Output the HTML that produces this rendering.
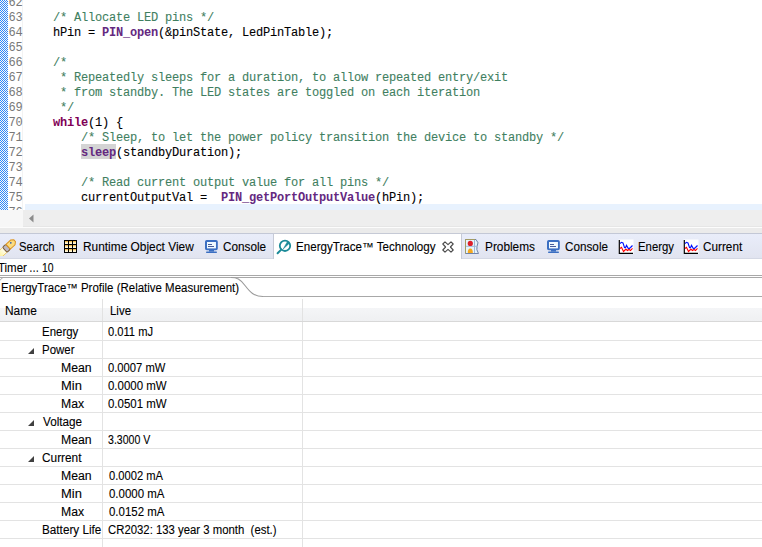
<!DOCTYPE html>
<html><head><meta charset="utf-8">
<style>
*{margin:0;padding:0;box-sizing:border-box}
html,body{width:762px;height:547px;overflow:hidden;background:#fff}
body{position:relative;font-family:"Liberation Sans",sans-serif;font-size:12px;color:#000}
.t{position:absolute;white-space:pre;line-height:20px;font-size:12px;transform-origin:0 0;color:#000;-webkit-text-stroke:0.1px #000}
#editor{position:absolute;left:0;top:0;width:762px;height:210px;overflow:hidden;background:#fff}
#checker{position:absolute;left:0;top:0;width:8px;height:210px;background-color:#fff;
 background-image:conic-gradient(#fffaf2 25%,#2a86ff 0 50%,#fffaf2 0 75%,#2a86ff 0);background-size:2px 2px}
.ln{position:absolute;left:8px;width:14.4px;text-align:right;font-family:"Liberation Mono",monospace;font-size:12px;letter-spacing:-0.2px;color:#787878;line-height:20px;white-space:pre}
.code{position:absolute;left:25px;font-family:"Liberation Mono",monospace;font-size:12px;letter-spacing:-0.2px;color:#000;line-height:20px;white-space:pre;-webkit-text-stroke:0.1px currentColor}
.cm{color:#3f7f5f}
.kw{color:#7f0055;font-weight:bold;-webkit-text-stroke:0}
.fn{color:#642880;font-weight:bold;-webkit-text-stroke:0}
.occ{}
#curline{position:absolute;left:25px;top:204px;width:737px;height:6px;background:#e8f2fe}
#gutline{position:absolute;left:22px;top:0;width:1px;height:210px;background:#f3f3f3}
.r{position:absolute}
</style></head><body>
<div id="editor">
 <div id="checker"></div>
 <div id="gutline"></div>
 <div id="curline"></div>
 <div class="r" style="left:81px;top:144px;width:35px;height:15px;background:#d4d4d4"></div>
<div class='ln' style='top:-7px'>62</div>
<div class='ln' style='top:8px'>63</div>
<div class='code' style='top:8px'>    <span class='cm'>/* Allocate LED pins */</span></div>
<div class='ln' style='top:23px'>64</div>
<div class='code' style='top:23px'>    hPin = <span class='fn'>PIN_open</span>(&amp;pinState, LedPinTable);</div>
<div class='ln' style='top:38px'>65</div>
<div class='ln' style='top:53px'>66</div>
<div class='code' style='top:53px'>    <span class='cm'>/*</span></div>
<div class='ln' style='top:68px'>67</div>
<div class='code' style='top:68px'>    <span class='cm'> * Repeatedly sleeps for a duration, to allow repeated entry/exit</span></div>
<div class='ln' style='top:83px'>68</div>
<div class='code' style='top:83px'>    <span class='cm'> * from standby. The LED states are toggled on each iteration</span></div>
<div class='ln' style='top:98px'>69</div>
<div class='code' style='top:98px'>    <span class='cm'> */</span></div>
<div class='ln' style='top:113px'>70</div>
<div class='code' style='top:113px'>    <span class='kw'>while</span>(1) {</div>
<div class='ln' style='top:128px'>71</div>
<div class='code' style='top:128px'>        <span class='cm'>/* Sleep, to let the power policy transition the device to standby */</span></div>
<div class='ln' style='top:143px'>72</div>
<div class='code' style='top:143px'>        <span class='occ'><span class='fn'>sleep</span></span>(standbyDuration);</div>
<div class='ln' style='top:158px'>73</div>
<div class='ln' style='top:173px'>74</div>
<div class='code' style='top:173px'>        <span class='cm'>/* Read current output value for all pins */</span></div>
<div class='ln' style='top:188px'>75</div>
<div class='code' style='top:188px'>        currentOutputVal =  <span class='fn'>PIN_getPortOutputValue</span>(hPin);</div>
<div class='ln' style='top:203px'>76</div>
</div>
<!-- horizontal scrollbar -->
<div class="r" style="left:0;top:210px;width:23px;height:17px;background:#f7f7f7"></div>
<div class="r" style="left:23px;top:210px;width:739px;height:17px;background:#eeeeee"></div>
<div class="r" style="left:23px;top:210px;width:17px;height:17px;background:#ececec"></div>
<svg class="r" style="left:23px;top:210px" width="17" height="17"><path d="M10.5 4.5 L6 8.5 L10.5 12.5 Z" fill="#8b8b8b"/></svg>
<div class="r" style="left:23px;top:226px;width:739px;height:1px;background:#e6e6e6"></div>
<div class="r" style="left:0;top:227px;width:762px;height:1px;background:#fcfcfc"></div>
<div class="r" style="left:0;top:228px;width:762px;height:5px;background:#ebebeb"></div>
<!-- tab bar -->
<div class="r" style="left:0;top:233px;width:762px;height:1px;background:#c3c8d6"></div>
<div class="r" style="left:0;top:234px;width:762px;height:24px;background:linear-gradient(#e9edfa,#e1e4f0)"></div>
<div class="r" style="left:0;top:258px;width:762px;height:1px;background:#d4d8e4"></div>
<div class="r" style="left:272.5px;top:233px;width:189.5px;height:26px;background:#fff;border:1px solid #c6cad6;border-bottom:none;border-top-left-radius:1px;border-top-right-radius:1px"></div>
<!-- icons -->
<svg class="r" style="left:0;top:236px" width="20" height="20" viewBox="0 0 20 20">
 <defs><linearGradient id="glow" x1="0" y1="0" x2="1" y2="0"><stop offset="0" stop-color="#fff3a0"/><stop offset="1" stop-color="#fffef6"/></linearGradient></defs>
 <g transform="translate(2 16.5) rotate(-43)">
  <rect x="-4" y="-3.2" width="8" height="6.4" fill="url(#glow)"/>
  <path d="M-4 -3.2 H4 M-4 3.2 H4" stroke="#f0c040" stroke-width="0.7"/>
  <rect x="3.8" y="-3.4" width="4.6" height="6.8" rx="1.4" fill="#bdb8c2" stroke="#7d5f38" stroke-width="1"/>
  <path d="M8.4 -3.2 H14.8 L17.3 -1.2 V1.2 L14.8 3.2 H8.4 Z" fill="#fbdc80" stroke="#dc9420" stroke-width="1"/>
  <circle cx="13" cy="-1" r="0.8" fill="#2a56a8"/>
 </g>
</svg>
<svg class="r" style="left:64px;top:240px" width="13" height="13" viewBox="0 0 13 13">
 <rect x="0" y="0" width="13" height="13" fill="#000"/>
 <defs><linearGradient id="cg" x1="0" y1="0" x2="0" y2="1"><stop offset="0" stop-color="#f0a21e"/><stop offset="0.45" stop-color="#fde7a8"/><stop offset="1" stop-color="#fffdf4"/></linearGradient></defs>
 <g fill="url(#cg)">
  <rect x="1" y="1" width="3" height="3"/><rect x="5" y="1" width="3" height="3"/><rect x="9" y="1" width="3" height="3"/>
  <rect x="1" y="5" width="3" height="3"/><rect x="5" y="5" width="3" height="3"/><rect x="9" y="5" width="3" height="3"/>
  <rect x="1" y="9" width="3" height="3"/><rect x="5" y="9" width="3" height="3"/><rect x="9" y="9" width="3" height="3"/>
 </g>
</svg>
<svg class="r" style="left:204px;top:239px" width="15" height="15" viewBox="0 0 15 15">
 <rect x="2" y="2" width="10.8" height="8.2" rx="0.8" fill="#fff" stroke="#3b6fc2" stroke-width="2"/>
 <rect x="3" y="3" width="8.8" height="6.2" fill="#f0faff"/>
 <rect x="4" y="5" width="4" height="1" fill="#4a5f9c"/>
 <rect x="4" y="7" width="6" height="1" fill="#4a5f9c"/>
 <rect x="5" y="11" width="5" height="1.6" fill="#3b6fc2"/>
 <rect x="2" y="12.4" width="11" height="1.5" rx="0.7" fill="#3b6fc2"/>
</svg>
<svg class="r" style="left:275px;top:238px" width="18" height="18" viewBox="0 0 18 18">
 <circle cx="10" cy="7.8" r="5.2" fill="none" stroke="#1b8a98" stroke-width="1.8"/>
 <path d="M6.2 11.6 L2.6 15.2" stroke="#1b8a98" stroke-width="2" stroke-linecap="round"/>
 <path d="M12.3 3.8 L14.2 5.4 L8.2 11 Z" fill="#1b8a98" stroke="#1b8a98" stroke-width="0.5"/>
</svg>
<svg class="r" style="left:442px;top:241px" width="12" height="12" viewBox="0 0 12 12">
 <path d="M0.8 3 L3 0.8 L6 3.6 L9 0.8 L11.2 3 L8.4 6 L11.2 9 L9 11.2 L6 8.4 L3 11.2 L0.8 9 L3.6 6 Z" fill="#fff" stroke="#4a4a4a" stroke-width="1.1" stroke-linejoin="round"/>
</svg>
<svg class="r" style="left:464px;top:238px" width="16" height="17" viewBox="0 0 16 17">
 <path d="M1.5 1.5 H12 Q15.5 4.5 13 8.5 Q12 11.5 14.5 15.5 H1.5 Z" fill="#e6f4fb" stroke="#7083a8" stroke-width="1"/>
 <path d="M1.5 15.5 V1.5 H11" fill="none" stroke="#a39c62" stroke-width="1"/>
 <path d="M2 8.3 H12.8 M10.5 2 V15" stroke="#9fb6d8" stroke-width="1"/>
 <circle cx="6.3" cy="5.4" r="2.6" fill="#dd1f2a"/>
 <path d="M3.8 15 Q3.6 10.8 6.3 10.6 Q9 10.8 8.8 15 Z" fill="#f6a81e"/>
</svg>
<svg class="r" style="left:545.7px;top:239px" width="15" height="15" viewBox="0 0 15 15">
 <rect x="2" y="2" width="10.8" height="8.2" rx="0.8" fill="#fff" stroke="#3b6fc2" stroke-width="2"/>
 <rect x="3" y="3" width="8.8" height="6.2" fill="#f0faff"/>
 <rect x="4" y="5" width="4" height="1" fill="#4a5f9c"/>
 <rect x="4" y="7" width="6" height="1" fill="#4a5f9c"/>
 <rect x="5" y="11" width="5" height="1.6" fill="#3b6fc2"/>
 <rect x="2" y="12.4" width="11" height="1.5" rx="0.7" fill="#3b6fc2"/>
</svg>
<svg class="r" style="left:618px;top:239px" width="16" height="16" viewBox="0 0 16 16" id="chart1">
 <rect x="0.5" y="0.5" width="15" height="14.5" fill="#fff"/>
 <path d="M1.3 1 V14.3 H15" fill="none" stroke="#000" stroke-width="1.2"/>
 <path d="M2 4.5 L3.5 3.3 L5 4 L6.5 8.5 L7.5 8.8 L8.5 6.3 L10 9 L11 9.7 L12.5 8.5 L14.5 6.5" fill="none" stroke="#0010ff" stroke-width="1.1"/>
 <path d="M2 9.5 L3.5 8.3 L5.5 12.5 L7 11 L8 10.3 L9.5 11.5 L11 10.5 L12.5 11.5 L14.5 9.3" fill="none" stroke="#ff0000" stroke-width="1.1"/>
</svg>
<svg class="r" style="left:683px;top:239px" width="16" height="16" viewBox="0 0 16 16">
 <rect x="0.5" y="0.5" width="15" height="14.5" fill="#fff"/>
 <path d="M1.3 1 V14.3 H15" fill="none" stroke="#000" stroke-width="1.2"/>
 <path d="M2 4.5 L3.5 3.3 L5 4 L6.5 8.5 L7.5 8.8 L8.5 6.3 L10 9 L11 9.7 L12.5 8.5 L14.5 6.5" fill="none" stroke="#0010ff" stroke-width="1.1"/>
 <path d="M2 9.5 L3.5 8.3 L5.5 12.5 L7 11 L8 10.3 L9.5 11.5 L11 10.5 L12.5 11.5 L14.5 9.3" fill="none" stroke="#ff0000" stroke-width="1.1"/>
</svg>
<!-- profile tab lines -->
<div class="r" style="left:0;top:275px;width:762px;height:1px;background:#a8a8a8"></div>
<div class="r" style="left:0;top:277px;width:762px;height:1px;background:#a8a8a8"></div>
<div class="r" style="left:263px;top:296px;width:499px;height:1px;background:#a8a8a8"></div>
<svg class="r" style="left:0;top:270px" width="300" height="30" viewBox="0 0 300 30">
 <path d="M0 10.5 Q1 8.5 3 7.5" fill="none" stroke="#a8a8a8" stroke-width="1"/>
 <path d="M231 7.5 C237 7.5 240 9 245 15.5 C250 22 254 26.5 263 26.5" fill="none" stroke="#999" stroke-width="1.1"/>
</svg>
<!-- table header -->
<div class="r" style="left:0;top:308px;width:762px;height:13px;background:linear-gradient(#f4f5f7,#eff0f2)"></div>
<div class="r" style="left:0;top:321px;width:762px;height:1px;background:#d8d8d8"></div>
<div class="r" style="left:102px;top:299px;width:1px;height:22px;background:#e2e2e2"></div>
<div class="r" style="left:302px;top:299px;width:1px;height:22px;background:#e2e2e2"></div>
<!-- grid -->
<div id="grid"></div>
<div class="r" style="left:102px;top:322px;width:1px;height:225px;background:#e3e3e3"></div>
<div class="r" style="left:302px;top:322px;width:1px;height:225px;background:#e3e3e3"></div>
<div class='r' style='left:0;top:340px;width:762px;height:1px;background:#e3e3e3'></div>
<div class='r' style='left:0;top:358px;width:762px;height:1px;background:#e3e3e3'></div>
<div class='r' style='left:0;top:376px;width:762px;height:1px;background:#e3e3e3'></div>
<div class='r' style='left:0;top:394px;width:762px;height:1px;background:#e3e3e3'></div>
<div class='r' style='left:0;top:412px;width:762px;height:1px;background:#e3e3e3'></div>
<div class='r' style='left:0;top:430px;width:762px;height:1px;background:#e3e3e3'></div>
<div class='r' style='left:0;top:448px;width:762px;height:1px;background:#e3e3e3'></div>
<div class='r' style='left:0;top:466px;width:762px;height:1px;background:#e3e3e3'></div>
<div class='r' style='left:0;top:484px;width:762px;height:1px;background:#e3e3e3'></div>
<div class='r' style='left:0;top:502px;width:762px;height:1px;background:#e3e3e3'></div>
<div class='r' style='left:0;top:520px;width:762px;height:1px;background:#e3e3e3'></div>
<div class='r' style='left:0;top:538px;width:762px;height:1px;background:#e3e3e3'></div>
<svg class='r' style='left:27px;top:347px' width='8' height='8'><path d='M7 1 V7 H1 Z' fill='#404040'/></svg>
<svg class='r' style='left:27px;top:419px' width='8' height='8'><path d='M7 1 V7 H1 Z' fill='#404040'/></svg>
<svg class='r' style='left:27px;top:455px' width='8' height='8'><path d='M7 1 V7 H1 Z' fill='#404040'/></svg>
<div class='t' style='left:18.87px;top:237.00px;transform:scaleX(0.9333)'>Search</div>
<div class='t' style='left:82.81px;top:237.00px;transform:scaleX(0.9901)'>Runtime Object View</div>
<div class='t' style='left:222.82px;top:237.00px;transform:scaleX(0.9791)'>Console</div>
<div class='t' style='left:296.33px;top:237.00px;transform:scaleX(0.9678)'>EnergyTrace™ Technology</div>
<div class='t' style='left:485.31px;top:237.00px;transform:scaleX(0.9857)'>Problems</div>
<div class='t' style='left:565.32px;top:237.00px;transform:scaleX(0.9767)'>Console</div>
<div class='t' style='left:637.75px;top:237.00px;transform:scaleX(0.9459)'>Energy</div>
<div class='t' style='left:703.32px;top:237.00px;transform:scaleX(0.9795)'>Current</div>
<div class='t' style='left:-1.65px;top:258.00px;transform:scaleX(0.9550)'>Timer</div>
<div class='t' style='left:29.31px;top:258.00px;transform:scaleX(0.8444)'>…</div>
<div class='t' style='left:41.53px;top:258.00px;transform:scaleX(0.8667)'>10</div>
<div class='t' style='left:0.64px;top:277.50px;transform:scaleX(0.9563)'>EnergyTrace™ Profile (Relative Measurement)</div>
<div class='t' style='left:5.01px;top:301.00px;transform:scaleX(0.9935)'>Name</div>
<div class='t' style='left:110.15px;top:301.00px;transform:scaleX(0.9550)'>Live</div>
<div class='t' style='left:42.15px;top:322.00px;transform:scaleX(0.9550)'>Energy</div>
<div class='t' style='left:108.40px;top:322.00px;transform:scaleX(0.9292)'>0.011 mJ</div>
<div class='t' style='left:42.15px;top:340.00px;transform:scaleX(0.9550)'>Power</div>
<div class='t' style='left:61.18px;top:358.00px;transform:scaleX(1.0214)'>Mean</div>
<div class='t' style='left:108.40px;top:358.00px;transform:scaleX(0.9344)'>0.0007 mW</div>
<div class='t' style='left:60.82px;top:376.00px;transform:scaleX(1.0778)'>Min</div>
<div class='t' style='left:108.40px;top:376.00px;transform:scaleX(0.9550)'>0.0000 mW</div>
<div class='t' style='left:60.88px;top:394.00px;transform:scaleX(1.0190)'>Max</div>
<div class='t' style='left:108.40px;top:394.00px;transform:scaleX(0.9550)'>0.0501 mW</div>
<div class='t' style='left:42.80px;top:412.00px;transform:scaleX(0.9775)'>Voltage</div>
<div class='t' style='left:61.18px;top:430.00px;transform:scaleX(1.0214)'>Mean</div>
<div class='t' style='left:107.82px;top:430.00px;transform:scaleX(0.8809)'>3.3000 V</div>
<div class='t' style='left:41.81px;top:448.00px;transform:scaleX(0.9872)'>Current</div>
<div class='t' style='left:61.18px;top:466.00px;transform:scaleX(1.0214)'>Mean</div>
<div class='t' style='left:108.70px;top:466.00px;transform:scaleX(0.9310)'>0.0002 mA</div>
<div class='t' style='left:60.82px;top:484.00px;transform:scaleX(1.0778)'>Min</div>
<div class='t' style='left:108.70px;top:484.00px;transform:scaleX(0.9550)'>0.0000 mA</div>
<div class='t' style='left:60.88px;top:502.00px;transform:scaleX(1.0190)'>Max</div>
<div class='t' style='left:108.70px;top:502.00px;transform:scaleX(0.9550)'>0.0152 mA</div>
<div class='t' style='left:42.32px;top:520.00px;transform:scaleX(0.9780)'>Battery Life</div>
<div class='t' style='left:108.25px;top:520.00px;transform:scaleX(0.9460)'>CR2032: 133 year 3 month  (est.)</div>
</body></html>
